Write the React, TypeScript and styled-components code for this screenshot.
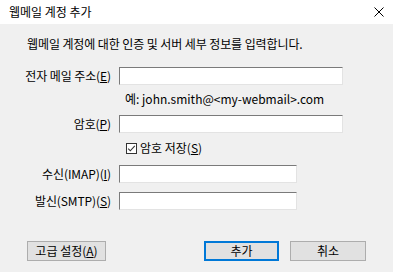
import { FC, ReactElement, ReactNode } from 'react'
import { createGlobalStyle, styled } from 'styled-components'

const GlobalStyle = createGlobalStyle`
  html, body {
    margin: 0;
    padding: 0;
    background: #f0f0f0;
  }
  body {
    font-family: "Noto Sans CJK KR", "Noto Sans", sans-serif;
    font-size: 12px;
    color: #000000;
  }
`

const Dialog = styled('div')`
  width: 393px;
  height: 272px;
  display: flex;
  flex-direction: column;
  background: #f0f0f0;
  overflow: hidden;
`

const TitleBar = styled('div')`
  height: 24px;
  display: flex;
  align-items: center;
  justify-content: space-between;
  padding: 0 8px 0 9px;
  background: #ffffff;
  line-height: 16px;
`

const CloseButton = styled('div')`
  width: 10px;
  height: 10px;
  margin-right: 1px;
  display: flex;
`

const Description = styled('div')`
  margin: 12px 0 0 27px;
  line-height: 16px;
  letter-spacing: -0.1px;
`

const FieldRow = styled('div')<{ $top: number }>`
  display: flex;
  align-items: center;
  margin-top: ${(p) => p.$top}px;
`

const Label = styled('label')`
  width: 119px;
  flex: none;
  padding-right: 8px;
  box-sizing: border-box;
  text-align: right;
  line-height: 16px;
  white-space: nowrap;
  letter-spacing: -0.1px;
`

const TextInput = styled('input')<{ $width: number }>`
  width: ${(p) => p.$width}px;
  height: 18px;
  box-sizing: border-box;
  margin: 0;
  padding: 0 3px;
  background: #ffffff;
  border-style: solid;
  border-width: 1px;
  border-color: #7a7a7a #e3e3e3 #e3e3e3 #7a7a7a;
  font: inherit;
  outline: none;
`

const Hint = styled('div')`
  margin-left: 125px;
  line-height: 16px;
  white-space: nowrap;
`

const CheckRow = styled('label')`
  display: flex;
  align-items: center;
  gap: 3px;
  margin: 9px 0 0 126px;
  height: 12px;
  line-height: 16px;
`

const Buttons = styled('div')`
  display: flex;
  align-items: center;
  margin-top: 31px;
  padding: 0 27px;
`

const ButtonGroup = styled('div')`
  display: flex;
  gap: 11px;
  margin-left: auto;
`

const Button = styled('button')<{ $width: number; $primary?: boolean }>`
  width: ${(p) => p.$width}px;
  height: 20px;
  box-sizing: border-box;
  margin: 0;
  padding: 0;
  background: #e1e1e1;
  border: ${(p) => (p.$primary ? '2px solid #0078d7' : '1px solid #adadad')};
  font: inherit;
  color: #000000;
  line-height: 16px;
`

const CheckBox: FC = (): ReactElement => (
  <svg width="11" height="11" viewBox="0 0 11 11">
    <rect x="0.5" y="0.5" width="10" height="10" fill="#ffffff" stroke="#333333" />
    <path d="M2.2 5.6 L4.3 7.8 L8.8 2.8" fill="none" stroke="#333333" strokeWidth="1.1" />
  </svg>
)

const Mnemonic: FC<{ children: ReactNode }> = ({ children }) => <u>{children}</u>

export default function App(): ReactElement {
  return (
    <>
      <GlobalStyle />
      <Dialog>
        <TitleBar>
          <span>웹메일 계정 추가</span>
          <CloseButton>
            <svg width="10" height="10" viewBox="0 0 10 10">
              <path d="M0.5 0.5 L9.5 9.5 M9.5 0.5 L0.5 9.5" stroke="#000000" strokeWidth="1" />
            </svg>
          </CloseButton>
        </TitleBar>

        <Description>웹메일 계정에 대한 인증 및 서버 세부 정보를 입력합니다.</Description>

        <FieldRow $top={15}>
          <Label>
            전자 메일 주소(<Mnemonic>E</Mnemonic>)
          </Label>
          <TextInput $width={224} />
        </FieldRow>

        <FieldRow $top={6}>
          <Hint>예: john.smith@&lt;my-webmail&gt;.com</Hint>
        </FieldRow>

        <FieldRow $top={8}>
          <Label>
            암호(<Mnemonic>P</Mnemonic>)
          </Label>
          <TextInput $width={224} type="password" />
        </FieldRow>

        <CheckRow>
          <CheckBox />
          <span>
            암호 저장(<Mnemonic>S</Mnemonic>)
          </span>
        </CheckRow>

        <FieldRow $top={11}>
          <Label>
            수신(IMAP)(<Mnemonic>I</Mnemonic>)
          </Label>
          <TextInput $width={178} />
        </FieldRow>

        <FieldRow $top={9}>
          <Label>
            발신(SMTP)(<Mnemonic>S</Mnemonic>)
          </Label>
          <TextInput $width={178} />
        </FieldRow>

        <Buttons>
          <Button $width={79}>
            고급 설정(<Mnemonic>A</Mnemonic>)
          </Button>
          <ButtonGroup>
            <Button $width={75} $primary>
              추가
            </Button>
            <Button $width={76}>취소</Button>
          </ButtonGroup>
        </Buttons>
      </Dialog>
    </>
  )
}
